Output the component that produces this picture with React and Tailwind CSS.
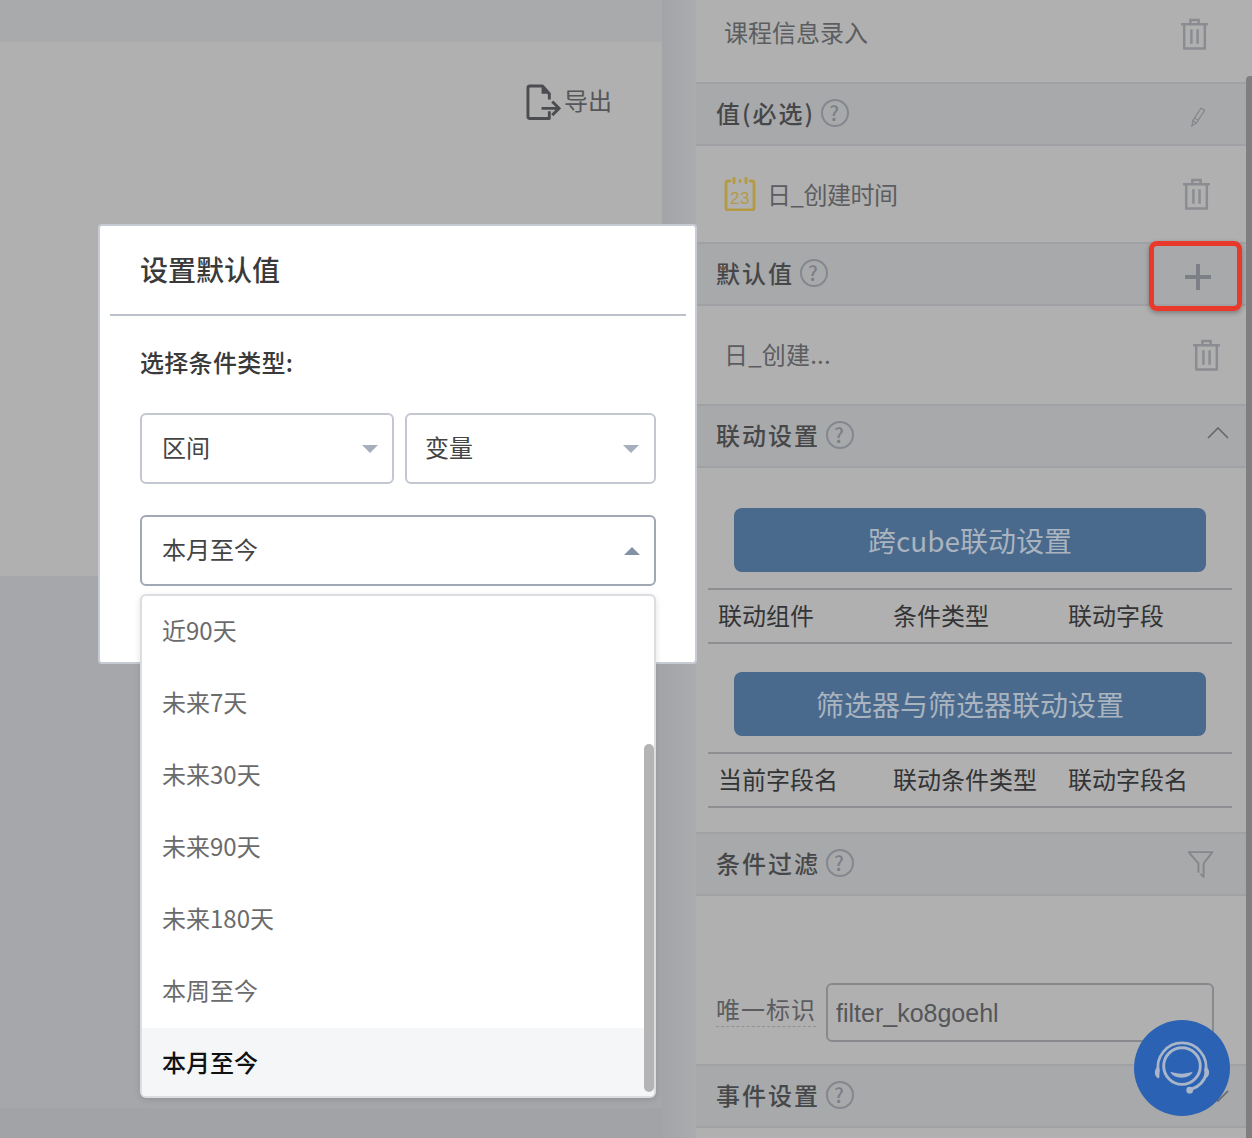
const FONT = '"Noto Sans CJK SC", sans-serif';
const LATIN = '"Liberation Sans", "Noto Sans CJK SC", sans-serif';

const OPTIONS = ["近90天", "未来7天", "未来30天", "未来90天", "未来180天", "本周至今"];

function TrashIcon() {
  return (
    <svg viewBox="0 0 28 32" className="w-[29px] h-[33px]" fill="none" stroke="#8a8c91" strokeWidth="2.4">
      <path d="M1 6h26M10 6V2h8v4" />
      <path d="M4 6v23.5h20V6" strokeLinejoin="round" />
      <path d="M11 11v14M17 11v14" />
    </svg>
  );
}

function PencilIcon() {
  return (
    <svg viewBox="0 0 18 24" className="w-[16px] h-[22px] mt-[6px] mr-[8px]" fill="none" stroke="#85878c" strokeWidth="1.3">
      <path d="M3 16 12.5 2l4 2.500L7 19l-4.600 2.500z" strokeLinejoin="round" />
      <path d="M3 16l4 3M5.500 13.500l4 2.500M2.400 21.500 1.500 23" />
    </svg>
  );
}

function HelpIcon() {
  return (
    <span className="w-[28px] h-[28px] rounded-full border-2 border-[#84878e] flex items-center justify-center text-[20px] leading-none text-[#7c7f86]">
      ?
    </span>
  );
}

function SectionHeader({ title, children }) {
  return (
    <div className="h-[62px] bg-[#a8a9ab] border-b-2 border-[#a0a1a5] pl-5 pr-[32px] flex items-center justify-between shrink-0">
      <div className="flex items-center gap-[6px] pb-[2px] text-[24px] font-medium tracking-[2px] text-[#464749]">
        {title}
        <HelpIcon />
      </div>
      {children}
    </div>
  );
}

function LinkTable({ label, cols }) {
  return (
    <div>
      <button className="block ml-[38px] w-[472px] h-[64px] rounded-lg bg-[#49698d] text-[28px] text-[#a9b4bf] text-center leading-[62px]">
        {label}
      </button>
      <div className="mt-4 ml-[12px] w-[524px] h-[56px] border-y-2 border-[#8d8f93] pl-[10px] pb-[3px] grid grid-cols-[175px_175px_1fr] items-center text-[24px] text-[#333436]">
        {cols.map((c) => (
          <span key={c} className="whitespace-nowrap">{c}</span>
        ))}
      </div>
    </div>
  );
}

function Select({ value, className, open }) {
  return (
    <div className={`h-[71px] rounded-md border-2 flex items-center justify-between text-[24px] text-[#444] ${className}`}>
      <span>{value}</span>
      <span
        className={
          open
            ? "w-0 h-0 mt-[3px] border-x-[8px] border-x-transparent border-b-[8px] border-b-[#8592a6]"
            : "w-0 h-0 mt-[4px] border-x-[8px] border-x-transparent border-t-[8px] border-t-[#a7afbc]"
        }
      />
    </div>
  );
}

export default function App() {
  return (
    <div className="relative w-[1252px] h-[1138px] overflow-hidden flex bg-[#a6a7aa]" style={{ fontFamily: FONT }}>
      {/* left canvas */}
      <div className="w-[662px] shrink-0 flex flex-col">
        <div className="h-[42px] bg-[#a9aaac]" />
        <div className="h-[534px] bg-[#b0b0b0] flex justify-end pt-[42px] pr-[50px]">
          <div className="flex items-start gap-[3px] text-[24px] leading-[36px] text-[#555659]">
            <svg viewBox="0 0 36 38" className="w-[35px] h-[37px]" fill="none" stroke="#4c4d50" strokeWidth="3">
              <path d="M24 28v7.500H4a2 2 0 0 1-2-2V4a2 2 0 0 1 2-2h13l7 8v6" strokeLinejoin="round" />
              <path d="M16 2h1l7 8h-8z" fill="#4c4d50" stroke="none" />
              <path d="M16 25h16M27 18l7 7-7 7" />
            </svg>
            <span className="-mt-[2px]">导出</span>
          </div>
        </div>
        <div className="flex-1" />
        <div className="h-[30px] bg-[#a2a3a6]" />
      </div>
      <div className="w-[34px] shrink-0 bg-linear-to-r from-[#a3a4a8] to-[#abacae]" />

      {/* right panel */}
      <div className="w-[550px] shrink-0 bg-[#b0b0b0] flex flex-col">
        <div className="h-[84px] border-b-2 border-[#a0a1a5] pl-[28px] pr-[37px] pb-[14px] flex items-center justify-between text-[24px] text-[#5c5d60] shrink-0">
          <span className="mb-[4px]">课程信息录入</span>
          <TrashIcon />
        </div>
        <SectionHeader title="值(必选)">
          <PencilIcon />
        </SectionHeader>
        <div className="h-[98px] border-b-2 border-[#a0a1a5] pl-[28px] pr-[35px] flex items-center justify-between shrink-0">
          <div className="flex items-center gap-[11px] text-[24px] tracking-[-0.5px] text-[#5c5d60]">
            <svg viewBox="0 0 32 34" className="w-[32px] h-[34px]" fill="none" stroke="#b59a44" strokeWidth="2.800">
              <path d="M6 4H4a2 2 0 0 0-2 2v25a2 2 0 0 0 2 2h24a2 2 0 0 0 2-2V6a2 2 0 0 0-2-2h-2" strokeLinecap="round" />
              <path d="M10 1v5M16 3.500v1M22 1v5" strokeLinecap="round" />
              <text x="16" y="27" textAnchor="middle" fontSize="17" letterSpacing="0.5" fill="#b59a44" stroke="none" fontFamily='"Liberation Sans", sans-serif'>23</text>
            </svg>
            <span>日_创建时间</span>
          </div>
          <TrashIcon />
        </div>
        <SectionHeader title="默认值">
          <span className="relative block w-[26px] h-[26px] mr-[3px] mt-[6px]">
            <span className="absolute left-0 right-0 top-[11px] h-[4px] bg-[#7c7f86]" />
            <span className="absolute top-0 bottom-0 left-[11px] w-[4px] bg-[#7c7f86]" />
          </span>
        </SectionHeader>
        <div className="h-[100px] border-b-2 border-[#a0a1a5] pl-[28px] pr-[25px] flex items-center justify-between text-[24px] text-[#5c5d60] shrink-0">
          <span className="mb-[2px] tracking-[0.2px]">日_创建...</span>
          <TrashIcon />
        </div>
        <SectionHeader title="联动设置">
          <svg viewBox="0 0 22 12" className="w-[22px] h-[12px] -mt-[6px] -mr-[15px]" fill="none" stroke="#65676b" strokeWidth="1.600">
            <path d="M1 11 11 1l10 10" />
          </svg>
        </SectionHeader>
        <div className="h-[364px] pt-[40px] flex flex-col gap-[28px] shrink-0">
          <LinkTable label="跨cube联动设置" cols={["联动组件", "条件类型", "联动字段"]} />
          <LinkTable label="筛选器与筛选器联动设置" cols={["当前字段名", "联动条件类型", "联动字段名"]} />
        </div>
        <div className="border-t-2 border-[#a0a1a5]" />
        <SectionHeader title="条件过滤">
          <svg viewBox="0 0 26 28" className="w-[27px] h-[29px]" fill="none" stroke="#84868b" strokeWidth="1.800">
            <path d="M1.500 2h23L16 13v13l-3-3" strokeLinejoin="round" />
            <path d="M1.500 2 11 13v9" strokeLinejoin="round" />
          </svg>
        </SectionHeader>
        <div className="h-[170px] border-b-2 border-[#a0a1a5] pl-5 pt-[87px] flex items-start gap-[10px] shrink-0">
          <span className="mt-[11px] h-[33px] leading-[30px] text-[24px] tracking-[1px] text-[#5c5d60] border-b border-dashed border-[#8f9195] whitespace-nowrap">
            唯一标识
          </span>
          <div className="w-[388px] h-[59px] rounded-md border-2 border-[#87898d] pl-[8px] pt-[2px] flex items-center text-[25px] text-[#55565a]" style={{ fontFamily: LATIN }}>
            filter_ko8goehl
          </div>
        </div>
        <SectionHeader title="事件设置">
          <svg viewBox="0 0 22 12" className="w-[22px] h-[12px] -mr-[15px]" fill="none" stroke="#65676b" strokeWidth="1.600">
            <path d="M1 1 11 11 21 1" />
          </svg>
        </SectionHeader>
      </div>
      <div className="w-[6px] shrink-0 bg-[#b0b0b0]" />

      {/* modal */}
      <div className="absolute left-[98px] top-[224px] w-[599px] h-[440px] bg-white border-2 border-[#c7cbd3] rounded-sm flex flex-col">
        <div className="ml-[10px] mr-[9px] h-[90px] border-b-2 border-[#bcc0c8] pl-[30px] pt-[22px] text-[28px] leading-[42px] font-medium text-[#3a3a3a] shrink-0">
          设置默认值
        </div>
        <div className="pl-[40px] pr-[39px]">
          <div className="mt-[28px] text-[24px] leading-[36px] tracking-[0.3px] font-medium text-[#3a3a3a]">选择条件类型:</div>
          <div className="mt-[33px] flex gap-[11px]">
            <Select value="区间" className="w-[254px] pl-[20px] pr-[14px] pb-[4px] border-[#c3c7cf]" />
            <Select value="变量" className="w-[251px] pl-[18px] pr-[15px] pb-[4px] border-[#c3c7cf]" />
          </div>
          <Select value="本月至今" className="mt-[31px] pl-[20px] pr-[14px] pb-[3px] border-[#a0a7b5]" open />
        </div>
      </div>

      {/* dropdown */}
      <div className="absolute left-[140px] top-[594px] w-[516px] h-[504px] rounded-md bg-white border-2 border-[#dcdde0] shadow-[0_2px_6px_rgba(0,0,0,0.12)] overflow-hidden">
        {OPTIONS.map((o) => (
          <div key={o} className="h-[72px] pl-[20px] pb-[4px] flex items-center text-[24px] text-[#6b6b6b]">
            {o}
          </div>
        ))}
        <div className="h-[68px] bg-[#f5f6f8] pl-[20px] flex items-center text-[24px] font-medium text-[#111]">本月至今</div>
        <div className="absolute right-0 top-[148px] bottom-[4px] w-[10px] rounded-full bg-[#b4b4b4]" />
      </div>

      {/* page scrollbar */}
      <div className="absolute right-0 top-[76px] bottom-0 w-[6px] rounded-tl-sm bg-[#7f7f7f]" />

      {/* red highlight */}
      <div className="absolute left-[1149px] top-[241px] w-[93px] h-[70px] rounded-lg border-[5px] border-[#e8392b] shadow-[0_2px_5px_rgba(0,0,0,0.3)]" />

      {/* chat bubble */}
      <div className="absolute left-[1134px] top-[1020px] w-[96px] h-[96px] rounded-full bg-[#2b62b3] flex items-center justify-center">
        <svg viewBox="0 0 60 56" className="w-[58px] h-[54px]" fill="none" stroke="#a9b6c9" strokeWidth="3">
          <circle cx="30" cy="26" r="19" />
          <path d="M5.500 32a25 25 0 1 1 49 0" strokeWidth="2.800" />
          <path d="M6 26c-5 2-6 11 0 13 1 .4 1-13 0-13zM54 26c5 2 6 11 0 13-1 .4-1-13 0-13z" fill="#a9b6c9" stroke="none" />
          <path d="M55 34c-2 8-7 13-15 16" />
          <circle cx="38" cy="51" r="3.500" fill="#a9b6c9" stroke="none" />
          <path d="M18 32c7 2.500 16 2.500 23 0-2 8-21 8-23 0z" fill="#a9b6c9" stroke="none" />
        </svg>
      </div>
    </div>
  );
}
